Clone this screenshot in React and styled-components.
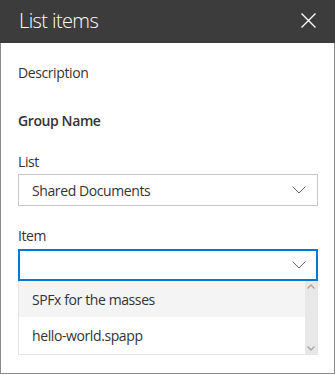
import React from "react";
import styled, { createGlobalStyle } from "styled-components";

const Global = createGlobalStyle`
  html, body { margin: 0; padding: 0; background: #ffffff; }
  body { font-family: "Open Sans", "Noto Sans", sans-serif; color: #333333; }
  * { box-sizing: border-box; }
`;

const Panel = styled.div`
  width: 335px;
  height: 374px;
  border: 1px solid #8a8a8a;
  border-top: none;
  background: #ffffff;
  display: flex;
  flex-direction: column;
  letter-spacing: -0.4px;
`;

const Header = styled.header`
  height: 43px;
  background: #3c3c3c;
  display: flex;
  align-items: center;
  justify-content: space-between;
  padding: 0 18px 2px 19px;
  margin: 0 -1px 0 -1px;
`;

const Title = styled.h1`
  margin: 0;
  font-family: "Open Sans", "Noto Sans", sans-serif;
  font-weight: 300;
  font-size: 20px;
  letter-spacing: -0.6px;
  line-height: 28px;
  color: #ffffff;
`;

const CloseButton = styled.button`
  border: none;
  background: transparent;
  padding: 0;
  width: 16px;
  height: 16px;
  display: flex;
  align-items: center;
  justify-content: center;
  margin-right: 1px;
  cursor: pointer;
`;

const Body = styled.div`
  padding: 20px 16px 0 17px;
  display: flex;
  flex-direction: column;
`;

const Text = styled.div`
  font-size: 14px;
  line-height: 20px;
  color: #333333;
  font-weight: ${(p) => (p.$bold ? 600 : 400)};
  margin-bottom: ${(p) => p.$mb || 0}px;
`;

const Field = styled.div`
  display: flex;
  flex-direction: column;
  margin-top: ${(p) => p.$mt || 0}px;
`;

const Label = styled.label`
  font-size: 14px;
  line-height: 20px;
  color: #333333;
  margin-bottom: ${(p) => p.$gap}px;
`;

const DropdownTitle = styled.div`
  height: 32px;
  width: 300px;
  border: 1px solid ${(p) => (p.$focused ? "#0078d4" : "#c8c8c8")};
  box-shadow: ${(p) => (p.$focused ? "inset 0 0 0 1px #0078d4" : "none")};
  display: flex;
  align-items: center;
  justify-content: space-between;
  padding: 0 11px 0 13px;
  font-size: 14px;
  color: #333333;
  background: #ffffff;
`;

const Options = styled.div`
  width: 300px;
  border: 1px solid #e4e4e4;
  border-top: none;
  display: flex;
  background: #ffffff;
`;

const OptionList = styled.div`
  flex: 1;
  display: flex;
  flex-direction: column;
`;

const Option = styled.div`
  height: ${(p) => p.$h}px;
  display: flex;
  align-items: center;
  padding-left: 13px;
  font-size: 14px;
  color: #333333;
  background: ${(p) => (p.$hover ? "#f4f4f4" : "#ffffff")};
`;

const ScrollTrack = styled.div`
  width: 12px;
  background: #e8e8e8;
  display: flex;
  flex-direction: column;
  justify-content: space-between;
  align-items: center;
  padding: 3px 0 3px 0;
`;

const Chevron = ({ color = "#666666" }) => (
  <svg width="14" height="8" viewBox="0 0 14 8">
    <polyline points="0.5,0.5 7,7 13.5,0.5" fill="none" stroke={color} strokeWidth="1" />
  </svg>
);

const SmallArrow = ({ up }) => (
  <svg width="8" height="5" viewBox="0 0 8 5">
    <polyline
      points={up ? "0.5,4.5 4,1 7.5,4.5" : "0.5,0.5 4,4 7.5,0.5"}
      fill="none"
      stroke="#a6a6a6"
      strokeWidth="1.4"
    />
  </svg>
);

export default function App() {
  return (
    <>
      <Global />
      <Panel>
        <Header>
          <Title>List items</Title>
          <CloseButton aria-label="Close">
            <svg width="15" height="15" viewBox="0 0 15 15">
              <path d="M0.5 0.5 L14.5 14.5 M14.5 0.5 L0.5 14.5" stroke="#ffffff" strokeWidth="1.4" />
            </svg>
          </CloseButton>
        </Header>
        <Body>
          <Text $mb={28}>Description</Text>
          <Text $bold $mb={1}>Group Name</Text>
          <Field $mt={20}>
            <Label $gap={2}>List</Label>
            <DropdownTitle>
              <span>Shared Documents</span>
              <Chevron />
            </DropdownTitle>
          </Field>
          <Field $mt={20}>
            <Label $gap={3}>Item</Label>
            <DropdownTitle $focused>
              <span />
              <Chevron />
            </DropdownTitle>
            <Options>
              <OptionList>
                <Option $hover $h={36}>SPFx for the masses</Option>
                <Option $h={37}>hello-world.spapp</Option>
              </OptionList>
              <ScrollTrack>
                <SmallArrow up />
                <SmallArrow />
              </ScrollTrack>
            </Options>
          </Field>
        </Body>
      </Panel>
    </>
  );
}
